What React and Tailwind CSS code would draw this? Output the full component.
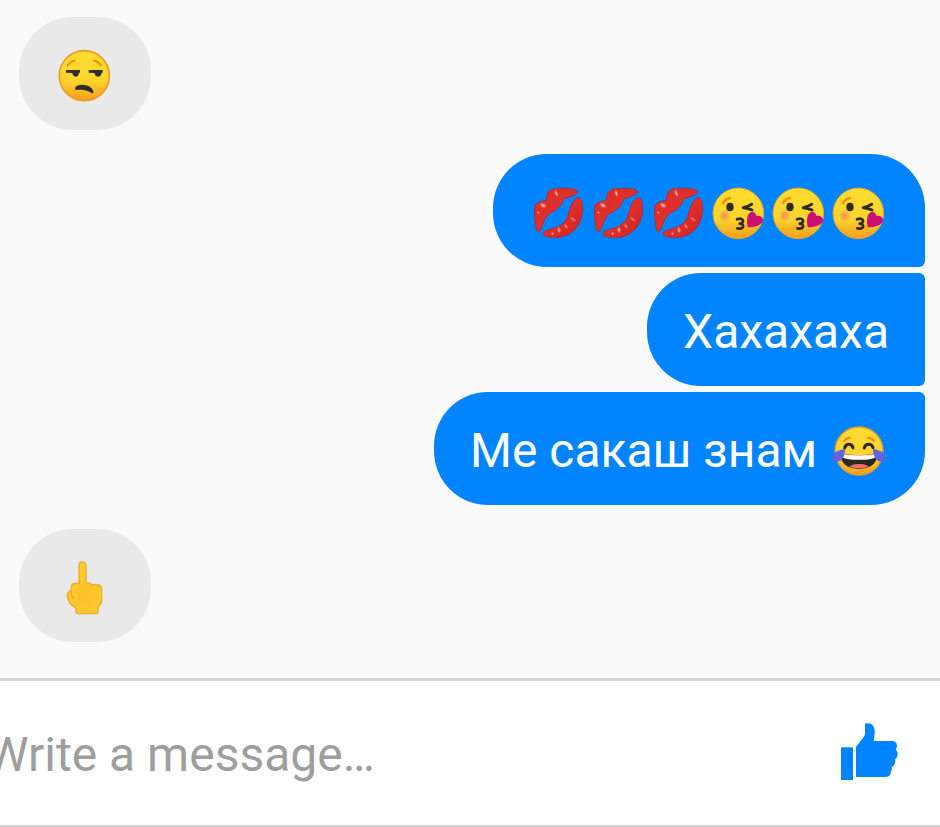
import React from 'react';

const EMOJI_CLASS = 'inline-block align-top w-[60px] h-[61px]';

// Gradients shared by every emoji on the page
function EmojiGradients() {
  return (
    <svg className="absolute w-0 h-0" aria-hidden="true">
      <defs>
        <linearGradient id="face" x1="0" y1="0" x2="0" y2="1">
          <stop offset="0" stopColor="#fddd30" />
          <stop offset="0.6" stopColor="#fdd42c" />
          <stop offset="1" stopColor="#f59e1d" />
        </linearGradient>
        <radialGradient id="blush">
          <stop offset="0" stopColor="#f58a5c" stopOpacity="0.85" />
          <stop offset="0.5" stopColor="#f78f55" stopOpacity="0.6" />
          <stop offset="1" stopColor="#fbc02d" stopOpacity="0" />
        </radialGradient>
        <radialGradient id="hand" cx="0.5" cy="0.65" r="0.6">
          <stop offset="0" stopColor="#ffbf28" />
          <stop offset="1" stopColor="#ffcf2e" />
        </radialGradient>
        <linearGradient id="lip" x1="0" y1="0" x2="1" y2="1">
          <stop offset="0" stopColor="#d92b26" />
          <stop offset="0.5" stopColor="#e0302b" />
          <stop offset="1" stopColor="#cf1d1c" />
        </linearGradient>
        <radialGradient id="shine">
          <stop offset="0" stopColor="#ffd0c8" />
          <stop offset="0.4" stopColor="#f59a92" stopOpacity="0.8" />
          <stop offset="1" stopColor="#e8403a" stopOpacity="0" />
        </radialGradient>
      </defs>
    </svg>
  );
}

function Unamused() {
  return (
    <svg className={EMOJI_CLASS} viewBox="135 105 180 183" role="img" aria-label="😒">
      <circle cx="223" cy="197" r="75" fill="url(#face)" stroke="#ec9a25" strokeWidth="5" />
      <path d="M173 166Q180 154 194 152M252 152Q266 154 273 167" fill="none" stroke="#ec9212" strokeWidth="6" strokeLinecap="round" />
      <path d="M168 180H210V188H207Q206 200 197 200Q188 199 187 189L168 188Z" fill="#302e2a" />
      <path d="M236 180H278V188H275Q273 200 264 200Q255 199 253 189L236 188Z" fill="#302e2a" />
      <path d="M196 239Q193 230 205 226C225 220 245 230 250 243Q252 251 245 249C230 240 216 238 202 240Q198 241 196 239Z" fill="#302e2a" />
    </svg>
  );
}

function Kiss() {
  return (
    <svg className={EMOJI_CLASS} viewBox="27 21 180 183" role="img" aria-label="😘">
      <circle cx="115" cy="115" r="76" fill="url(#face)" stroke="#e5a02a" strokeWidth="3" />
      <circle cx="74" cy="122" r="20" fill="url(#blush)" />
      <path d="M69 84Q75 72 90 69" fill="none" stroke="#ee9510" strokeWidth="8" strokeLinecap="round" />
      <ellipse cx="90" cy="96" rx="11" ry="13" fill="#2f2a1c" />
      <path d="M155 88Q144 95 130 98Q144 99 156 105" fill="none" stroke="#2f2a1c" strokeWidth="9" strokeLinecap="round" strokeLinejoin="round" />
      <path d="M111 133Q125 127 129 136Q131 144 119 146Q132 148 129 156Q125 163 112 160" fill="none" stroke="#2f2a1c" strokeWidth="8" strokeLinecap="round" strokeLinejoin="round" />
      <path d="M143 157C141 142 139 125 147 116C155 106 169 112 169 123C180 119 191 127 189 138C186 151 160 157 143 157Z" fill="#cb0f75" />
    </svg>
  );
}

function Lips() {
  return (
    <svg className={EMOJI_CLASS} viewBox="12 21 180 183" role="img" aria-label="💋">
      <g fill="url(#lip)" stroke="#a9272f" strokeWidth="2">
        <path d="M29 96C31 83 45 80 64 76C64 54 73 41 91 41C116 37 155 41 158 49C160 56 141 64 116 72C112 88 99 104 74 116C60 124 57 143 48 161C44 172 37 173 34 162C29 142 27 118 29 96Z" />
        <path d="M160 67C171 70 175 90 172 113C168 153 138 187 91 188C69 188 55 183 54 177C55 168 69 164 88 159C111 152 123 140 129 121C135 98 144 72 160 67Z" />
      </g>
      <g fill="url(#shine)">
        <ellipse cx="94" cy="55" rx="6" ry="14" transform="rotate(-18 94 55)" />
        <ellipse cx="54" cy="91" rx="14" ry="9" transform="rotate(28 54 91)" />
        <ellipse cx="102" cy="165" rx="7" ry="12" transform="rotate(-12 102 165)" />
        <ellipse cx="123" cy="154" rx="6" ry="12" transform="rotate(-32 123 154)" opacity="0.7" />
        <ellipse cx="144" cy="133" rx="6" ry="14" transform="rotate(-48 144 133)" opacity="0.6" />
        <circle cx="83" cy="176" r="6" />
        <circle cx="40" cy="113" r="6" opacity="0.7" />
      </g>
    </svg>
  );
}

function TearsOfJoy() {
  return (
    <svg className={EMOJI_CLASS} viewBox="27 30 180 183" role="img" aria-label="😂">
      <circle cx="117" cy="123" r="72" fill="url(#face)" stroke="#ec9a25" strokeWidth="4" />
      <path d="M72 93Q77 85 90 83M144 83Q157 85 162 93" fill="none" stroke="#ec8a12" strokeWidth="6" strokeLinecap="round" />
      <path d="M74 114C77 99 96 99 99 114M133 114C136 99 155 99 159 113" fill="none" stroke="#2f2a26" strokeWidth="9" strokeLinecap="round" />
      <path d="M62 133H172C171 158 151 175 117 175C83 175 63 158 62 133Z" fill="#2d2622" />
      <path d="M66 132H168Q170 148 155 149Q117 153 79 149Q64 148 66 132Z" fill="#ffffff" />
      <path d="M64 132Q117 139 170 132" fill="none" stroke="#ef8d13" strokeWidth="3" />
      <path d="M62 140Q72 146 98 149L137 149Q162 146 171 140C168 163 147 176 117 176C86 176 66 163 62 140Z" fill="#2d2622" />
      <path d="M88 170Q98 161 117 162Q137 161 146 170Q117 180 88 170Z" fill="#f06f72" />
      <path d="M75 116C75 137 68 154 50 155C37 155 34 142 39 133C46 122 61 121 75 116Z" fill="#6463df" />
      <path d="M159 116C173 121 188 122 195 133C200 143 196 155 184 155C166 154 159 137 159 116Z" fill="#6463df" />
    </svg>
  );
}

function MiddleFinger() {
  return (
    <svg className={EMOJI_CLASS} viewBox="135 111 180 183" role="img" aria-label="🖕">
      <path
        d="M207 190V134Q208 126 217 126Q227 126 228 135V188Q240 186 248 195Q257 192 264 195Q275 197 275 209V240Q275 251 264 262V275Q264 281 257 281H204Q198 281 198 274V264C184 257 174 244 172 230C171 220 173 214 184 212V199Q185 190 195 190Z"
        fill="url(#hand)"
        stroke="#edac22"
        strokeWidth="4"
        strokeLinejoin="round"
      />
      <path d="M184 211V222Q185 231 193 236" fill="none" stroke="#edac22" strokeWidth="4" strokeLinecap="round" />
    </svg>
  );
}

function ThumbsUp() {
  return (
    <svg className="w-[57px] h-[57px]" viewBox="0 0 171 171" fill="#0084ff" aria-hidden="true">
      <path d="M0 73H36V171H0Z" />
      <path d="M45 162V72L70 39Q72 36 72 30V2C90 -3 101 7 101 27C101 38 99 45 98 54H156C167 54 172 69 164 80C173 86 172 103 162 109C165 119 160 128 152 133C154 139 151 145 149 148C150 156 143 162 135 162Z" />
    </svg>
  );
}

const BUBBLE_CLASS = 'px-9 pt-7 pb-6 text-5xl leading-[61px] rounded-[54px]';

function Received({ children }) {
  return <div className={`${BUBBLE_CLASS} self-start bg-[#e9e9e9]`}>{children}</div>;
}

function Sent({ corners, children }) {
  return <div className={`${BUBBLE_CLASS} ${corners} bg-[#0084ff] text-white`}>{children}</div>;
}

export default function App() {
  return (
    <div className="min-h-screen flex flex-col overflow-hidden bg-[#fafafa] font-['Roboto',sans-serif]">
      <EmojiGradients />

      {/* Conversation */}
      <main className="flex-1 flex flex-col gap-6 pt-[17px] pb-9 pl-[19px] pr-[15px]">
        <Received>
          <Unamused />
        </Received>

        <div className="flex flex-col items-end gap-1.5">
          <Sent corners="rounded-br-md">
            <span className="flex">
              <Lips />
              <Lips />
              <Lips />
              <Kiss />
              <Kiss />
              <Kiss />
            </span>
          </Sent>
          <Sent corners="rounded-r-md">Хахахаха</Sent>
          <Sent corners="rounded-tr-md">
            Ме сакаш знам <TearsOfJoy />
          </Sent>
        </div>

        <Received>
          <MiddleFinger />
        </Received>
      </main>

      {/* Composer */}
      <form
        className="flex items-center bg-white border-t-3 border-b-2 border-[#d6d6d6] pt-10 pb-10 pr-[42px]"
        onSubmit={(e) => e.preventDefault()}
      >
        <input
          type="text"
          aria-label="Write a message"
          placeholder="Write a message…"
          className="flex-1 min-w-0 -ml-3.5 pt-1 text-5xl leading-[60px] text-gray-900 placeholder:text-[#9e9e9e] outline-none"
        />
        <button type="submit" aria-label="Send a like" className="shrink-0 pb-1">
          <ThumbsUp />
        </button>
      </form>
    </div>
  );
}
